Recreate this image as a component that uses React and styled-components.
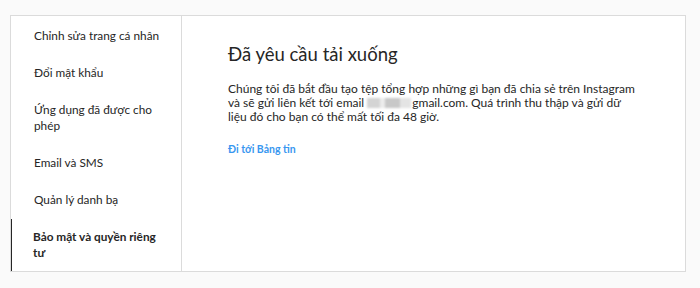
import React from "react";
import styled, { createGlobalStyle } from "styled-components";

const Global = createGlobalStyle`
  html, body { margin: 0; padding: 0; background: #fafafa; }
  body { font-family: Lato, "Noto Sans", sans-serif; color: #262626; }
`;

const Page = styled.div`
  padding: 15px 14px 17px 10px;
`;

const Card = styled.div`
  display: flex;
  background: #fff;
  border: 1px solid #dbdbdb;
  height: 257px;
  box-sizing: border-box;
  width: 676px;
  overflow: hidden;
`;

const Menu = styled.ul`
  list-style: none;
  margin: 0;
  padding: 1.5px 0 0;
  width: 170px;
  flex: none;
  border-right: 1px solid #dbdbdb;
`;

const MenuItem = styled.li`
  box-sizing: border-box;
  padding: 10.5px 14px 10.5px ${(p) => (p.$active ? "21px" : "23px")};
  font-size: 11.8px;
  line-height: 16px;
  font-weight: ${(p) => (p.$active ? 700 : 400)};
  color: #262626;
  border-left: ${(p) => (p.$active ? "2px solid #262626" : "none")};
  margin-left: ${(p) => (p.$active ? "-1px" : "0")};
`;

const Content = styled.div`
  flex: 1;
  padding: 26px 20px 0 46px;
`;

const Title = styled.h2`
  margin: 0 0 16px;
  font-size: 18.5px;
  line-height: 24px;
  font-weight: 400;
  color: #262626;
`;

const Body = styled.p`
  margin: 0 0 13px;
  font-size: 12px;
  line-height: 14px;
  color: #262626;
  white-space: nowrap;
`;

const Blur = styled.span`
  display: inline-block;
  width: 44px;
  height: 10px;
  vertical-align: -1px;
  background: linear-gradient(90deg, #d4d4d4 0 30%, #ececec 30% 40%, #c8c8c8 40% 75%, #e4e4e4 75%);
  filter: blur(1px);
  margin-right: 1px;
`;

const Link = styled.a`
  font-size: 10.5px;
  font-weight: 700;
  color: #3897f0;
  text-decoration: none;
`;

const items = [
  "Chỉnh sửa trang cá nhân",
  "Đổi mật khẩu",
  "Ứng dụng đã được cho phép",
  "Email và SMS",
  "Quản lý danh bạ",
  "Bảo mật và quyền riêng tư",
];

export default function App() {
  return (
    <>
      <Global />
      <Page>
        <Card>
          <Menu>
            {items.map((t, i) => (
              <MenuItem key={t} $active={i === items.length - 1}>
                {t}
              </MenuItem>
            ))}
          </Menu>
          <Content>
            <Title>Đã yêu cầu tải xuống</Title>
            <Body>
              Chúng tôi đã bắt đầu tạo tệp tổng hợp những gì bạn đã chia sẻ trên Instagram
              <br />
              và sẽ gửi liên kết tới email <Blur />gmail.com. Quá trình thu thập và gửi dữ
              <br />
              liệu đó cho bạn có thể mất tối đa 48 giờ.
            </Body>
            <Link href="#">Đi tới Bảng tin</Link>
          </Content>
        </Card>
      </Page>
    </>
  );
}
